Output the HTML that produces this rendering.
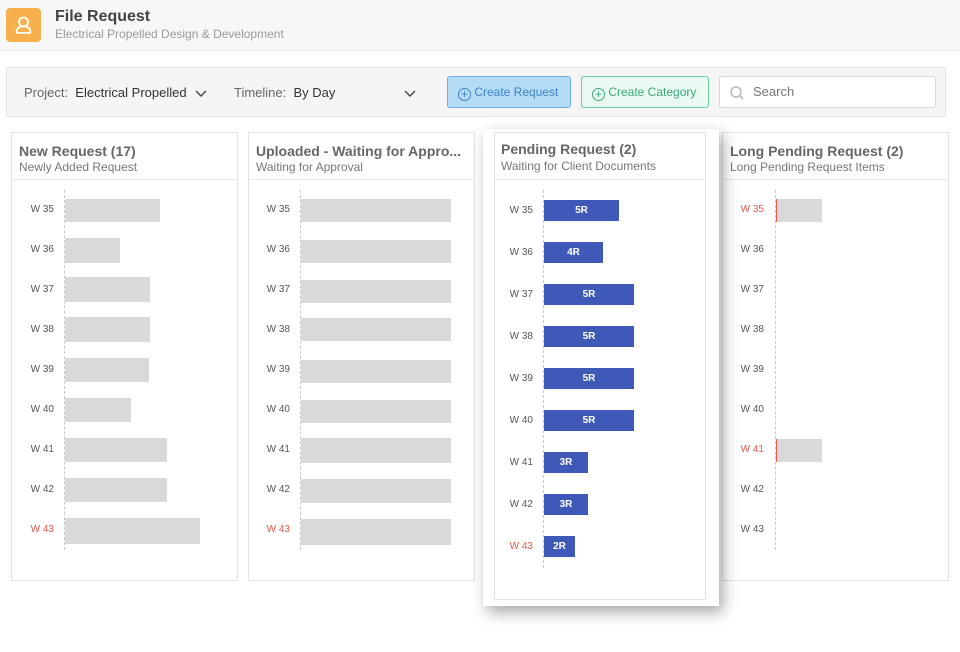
<!DOCTYPE html>
<html><head><meta charset="utf-8"><style>
*{box-sizing:border-box;margin:0;padding:0}
body{width:960px;height:652px;background:#fff;font-family:"Liberation Sans",Arial,sans-serif;position:relative;overflow:hidden}
.a{position:absolute}
.hdr{left:0;top:0;width:960px;height:51px;background:#f7f7f7;border-bottom:1px solid #ececec}
.card{background:#fff;border:1px solid #e2e2e2}
.t{font-size:14px;font-weight:bold;color:#666}
.s{font-size:12px;color:#777}
.lbl{font-size:10px;color:#555;width:30px;text-align:right}
.red{color:#e8584f}
.bar{background:#d9d9d9}
.bb{background:#3f59b9;color:#fff;font-size:10px;font-weight:bold;text-align:center;line-height:21px;height:21px}
.ax{border-left:1px dashed #c8c8d0;width:0}
</style></head><body>
<div class="a hdr"></div>
<div class="a" style="left:6px;top:8px;width:35px;height:34px;background:#f7b04c;border-radius:4px">
<svg width="35" height="34" viewBox="0 0 35 34"><circle cx="17.5" cy="14" r="4.5" fill="none" stroke="#fff" stroke-width="1.8"/><path d="M10.5 25 Q10.5 19 15 19 M24.5 25 Q24.5 19 20 19 M10.5 25 H24.5" fill="none" stroke="#fff" stroke-width="1.8"/></svg></div>
<div class="a" style="left:55px;top:8px;font-size:16px;font-weight:bold;color:#444">File Request</div>
<div class="a" style="left:55px;top:27px;font-size:12px;color:#999">Electrical Propelled Design &amp; Development</div>

<div class="a" style="left:6px;top:67px;width:940px;height:50px;background:#f5f5f5;border:1px solid #e3e3e3"></div>
<div class="a" style="left:24px;top:85px;font-size:13px;color:#666">Project: <span style="color:#333">&nbsp;Electrical Propelled</span></div>
<svg class="a" style="left:194px;top:89px" width="14" height="9"><path d="M2 2 L7 7 L12 2" fill="none" stroke="#444" stroke-width="1.4"/></svg>
<div class="a" style="left:234px;top:85px;font-size:13px;color:#666">Timeline: <span style="color:#333">&nbsp;By Day</span></div>
<svg class="a" style="left:403px;top:89px" width="14" height="9"><path d="M2 2 L7 7 L12 2" fill="none" stroke="#444" stroke-width="1.4"/></svg>
<div class="a" style="left:447px;top:76px;width:124px;height:32px;background:#b4dcf7;border:1px solid #6eaee0;border-radius:3px;color:#3f83c8;font-size:12px;line-height:30px;padding-left:10px">
<span style="display:inline-block;width:13px;height:13px;border:1px solid #3f83c8;border-radius:50%;text-align:center;line-height:11px;font-size:12px;vertical-align:-2px">+</span> Create Request</div>
<div class="a" style="left:581px;top:76px;width:128px;height:32px;background:#eafaf3;border:1px solid #6cc9a0;border-radius:3px;color:#3aa876;font-size:12px;line-height:30px;padding-left:10px">
<span style="display:inline-block;width:13px;height:13px;border:1px solid #3aa876;border-radius:50%;text-align:center;line-height:11px;font-size:12px;vertical-align:-2px">+</span> Create Category</div>
<div class="a" style="left:719px;top:76px;width:217px;height:32px;background:#fff;border:1px solid #d8d8d8;border-radius:3px"></div>
<svg class="a" style="left:729px;top:85px" width="16" height="16"><circle cx="7" cy="7" r="5" fill="none" stroke="#bbb" stroke-width="1.6"/><path d="M10.5 10.5 L14 14" stroke="#bbb" stroke-width="1.8"/></svg>
<div class="a" style="left:753px;top:84px;font-size:13px;color:#777">Search</div>

<!-- col1 -->
<div class="a card" style="left:11px;top:132px;width:227px;height:449px"></div>
<div class="a" style="left:11px;top:179px;width:227px;border-top:1px solid #e6e6e6"></div>
<div class="a t" style="left:19px;top:143px">New Request (17)</div>
<div class="a s" style="left:19px;top:160px">Newly Added Request</div>
<div class="a ax" style="left:64px;top:190px;height:360px"></div>
<!-- col2 -->
<div class="a card" style="left:248px;top:132px;width:227px;height:449px"></div>
<div class="a" style="left:248px;top:179px;width:227px;border-top:1px solid #e6e6e6"></div>
<div class="a t" style="left:256px;top:143px">Uploaded - Waiting for Appro...</div>
<div class="a s" style="left:256px;top:160px">Waiting for Approval</div>
<div class="a ax" style="left:300px;top:190px;height:360px"></div>
<!-- col4 -->
<div class="a card" style="left:722px;top:132px;width:227px;height:449px"></div>
<div class="a" style="left:722px;top:179px;width:227px;border-top:1px solid #e6e6e6"></div>
<div class="a t" style="left:730px;top:143px">Long Pending Request (2)</div>
<div class="a s" style="left:730px;top:160px">Long Pending Request Items</div>
<div class="a ax" style="left:775px;top:190px;height:360px"></div>
<div class="a bar" style="left:776px;top:199px;width:46px;height:23px;border-left:1px solid #e8584f"></div>
<div class="a bar" style="left:776px;top:439px;width:46px;height:23px;border-left:1px solid #e8584f"></div>
<!-- col3 -->
<div class="a" style="left:483px;top:129px;width:236px;height:477px;background:#fff;box-shadow:4px 6px 14px rgba(0,0,0,.35)"></div>
<div class="a card" style="left:494px;top:132px;width:212px;height:468px"></div>
<div class="a" style="left:494px;top:179px;width:212px;border-top:1px solid #e6e6e6"></div>
<div class="a t" style="left:501px;top:141px">Pending Request (2)</div>
<div class="a s" style="left:501px;top:159px">Waiting for Client Documents</div>
<div class="a ax" style="left:543px;top:190px;height:378px"></div>

<div id="rows"></div>
<!-- labels & bars col1/col2/col4 -->
<div class="a lbl" style="left:24px;top:204px">W 35</div><div class="a bar" style="left:65px;top:199px;width:95px;height:23px"></div>
<div class="a lbl" style="left:24px;top:244px">W 36</div><div class="a bar" style="left:65px;top:238px;width:55px;height:25px"></div>
<div class="a lbl" style="left:24px;top:284px">W 37</div><div class="a bar" style="left:65px;top:277px;width:85px;height:25px"></div>
<div class="a lbl" style="left:24px;top:324px">W 38</div><div class="a bar" style="left:65px;top:317px;width:85px;height:25px"></div>
<div class="a lbl" style="left:24px;top:364px">W 39</div><div class="a bar" style="left:65px;top:358px;width:84px;height:24px"></div>
<div class="a lbl" style="left:24px;top:404px">W 40</div><div class="a bar" style="left:65px;top:398px;width:66px;height:24px"></div>
<div class="a lbl" style="left:24px;top:444px">W 41</div><div class="a bar" style="left:65px;top:438px;width:102px;height:24px"></div>
<div class="a lbl" style="left:24px;top:484px">W 42</div><div class="a bar" style="left:65px;top:478px;width:102px;height:24px"></div>
<div class="a lbl red" style="left:24px;top:524px">W 43</div><div class="a bar" style="left:65px;top:518px;width:135px;height:26px"></div>

<div class="a lbl" style="left:260px;top:204px">W 35</div><div class="a bar" style="left:301px;top:199px;width:150px;height:23px"></div>
<div class="a lbl" style="left:260px;top:244px">W 36</div><div class="a bar" style="left:301px;top:240px;width:150px;height:23px"></div>
<div class="a lbl" style="left:260px;top:284px">W 37</div><div class="a bar" style="left:301px;top:280px;width:150px;height:23px"></div>
<div class="a lbl" style="left:260px;top:324px">W 38</div><div class="a bar" style="left:301px;top:318px;width:150px;height:23px"></div>
<div class="a lbl" style="left:260px;top:364px">W 39</div><div class="a bar" style="left:301px;top:360px;width:150px;height:23px"></div>
<div class="a lbl" style="left:260px;top:404px">W 40</div><div class="a bar" style="left:301px;top:400px;width:150px;height:23px"></div>
<div class="a lbl" style="left:260px;top:444px">W 41</div><div class="a bar" style="left:301px;top:438px;width:150px;height:25px"></div>
<div class="a lbl" style="left:260px;top:484px">W 42</div><div class="a bar" style="left:301px;top:479px;width:150px;height:24px"></div>
<div class="a lbl red" style="left:260px;top:524px">W 43</div><div class="a bar" style="left:301px;top:519px;width:150px;height:26px"></div>

<div class="a lbl red" style="left:734px;top:204px">W 35</div>
<div class="a lbl" style="left:734px;top:244px">W 36</div>
<div class="a lbl" style="left:734px;top:284px">W 37</div>
<div class="a lbl" style="left:734px;top:324px">W 38</div>
<div class="a lbl" style="left:734px;top:364px">W 39</div>
<div class="a lbl" style="left:734px;top:404px">W 40</div>
<div class="a lbl red" style="left:734px;top:444px">W 41</div>
<div class="a lbl" style="left:734px;top:484px">W 42</div>
<div class="a lbl" style="left:734px;top:524px">W 43</div>

<div class="a lbl" style="left:503px;top:205px">W 35</div><div class="a bb" style="left:544px;top:200px;width:75px">5R</div>
<div class="a lbl" style="left:503px;top:247px">W 36</div><div class="a bb" style="left:544px;top:242px;width:59px">4R</div>
<div class="a lbl" style="left:503px;top:289px">W 37</div><div class="a bb" style="left:544px;top:284px;width:90px">5R</div>
<div class="a lbl" style="left:503px;top:331px">W 38</div><div class="a bb" style="left:544px;top:326px;width:90px">5R</div>
<div class="a lbl" style="left:503px;top:373px">W 39</div><div class="a bb" style="left:544px;top:368px;width:90px">5R</div>
<div class="a lbl" style="left:503px;top:415px">W 40</div><div class="a bb" style="left:544px;top:410px;width:90px">5R</div>
<div class="a lbl" style="left:503px;top:457px">W 41</div><div class="a bb" style="left:544px;top:452px;width:44px">3R</div>
<div class="a lbl" style="left:503px;top:499px">W 42</div><div class="a bb" style="left:544px;top:494px;width:44px">3R</div>
<div class="a lbl red" style="left:503px;top:541px">W 43</div><div class="a bb" style="left:544px;top:536px;width:31px">2R</div>
</body></html>
